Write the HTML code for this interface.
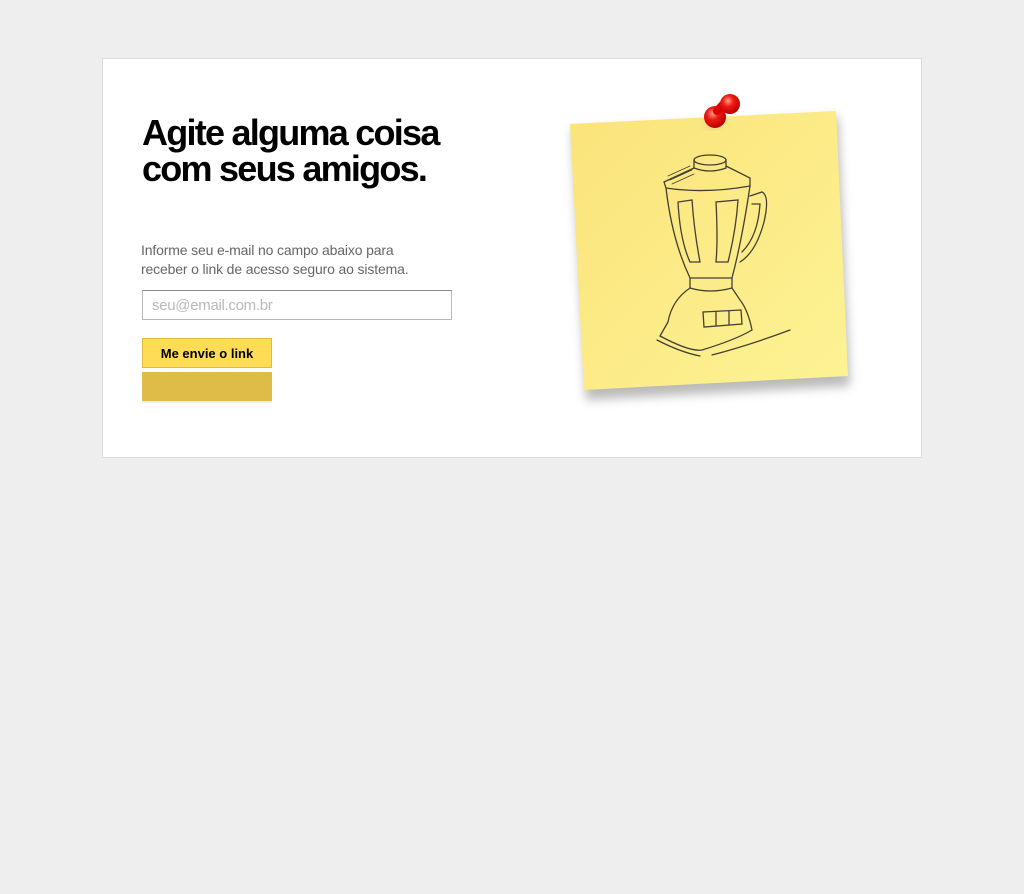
<!DOCTYPE html>
<html><head><meta charset="utf-8"><style>
html,body{margin:0;padding:0;background:#eeeeee;width:1024px;height:894px;overflow:hidden;font-family:"Liberation Sans",Arial,sans-serif}
.card{position:absolute;left:102px;top:58px;width:818px;height:398px;background:#fff;border:1px solid #dcdcdc}
h1{position:absolute;left:142px;top:115px;margin:0;font-size:36px;line-height:36px;font-weight:bold;letter-spacing:-1.75px;color:#000}
p{position:absolute;left:141px;top:241px;margin:0;font-size:14px;line-height:19px;color:#666;letter-spacing:-0.15px}
.in{position:absolute;left:142px;top:290px;width:308px;height:28px;border:1px solid #b8b8b8;border-top-color:#8a8a8a;box-sizing:content-box}
.in span{position:absolute;left:9px;top:6px;font-size:15px;color:#b9b9b9;letter-spacing:-0.3px}
.b1{position:absolute;left:142px;top:338px;width:128px;height:28px;background:#ffdc55;border:1px solid #e0bb3a;font-size:13px;font-weight:bold;text-align:center;line-height:29px;color:#000}
.b2{position:absolute;left:142px;top:372px;width:130px;height:29px;background:#dfbc47;box-shadow:0 2px 0 #eee}
</style></head><body>
<div class="card"></div>
<h1>Agite alguma coisa<br>com seus amigos.</h1>
<p>Informe seu e-mail no campo abaixo para<br>receber o link de acesso seguro ao sistema.</p>
<div class="in"><span>seu@email.com.br</span></div>
<div class="b1">Me envie o link</div>
<div class="b2"></div>
<svg style="position:absolute;left:0;top:0" width="1024" height="894">
<defs>
<filter id="sh" x="-20%" y="-20%" width="140%" height="140%"><feGaussianBlur stdDeviation="5"/></filter>
<linearGradient id="g" x1="0" y1="0" x2="1" y2="1"><stop offset="0" stop-color="#fbe37a"/><stop offset="1" stop-color="#fcf394"/></linearGradient>
<radialGradient id="pin" cx="0.4" cy="0.35" r="0.7"><stop offset="0" stop-color="#ff9a8a"/><stop offset="0.4" stop-color="#ee1a10"/><stop offset="1" stop-color="#b00000"/></radialGradient>
</defs>
<polygon points="572,130 838,117 850,386 586,400" fill="#777" opacity="0.5" filter="url(#sh)"/>
<polygon points="570,124 836,111 848,376 584,390" fill="url(#g)"/>
<g fill="none" stroke="#222" stroke-width="1.3" stroke-linecap="round" opacity="0.85">
<ellipse cx="710" cy="160" rx="16" ry="5"/>
<path d="M694,160 L694,168 Q710,174 726,168 L726,160"/>
<path d="M694,168 L664,182 L666,188 Q705,194 750,186 L750,178 L726,166"/>
<path d="M666,188 Q672,240 690,278 L732,278 Q742,240 750,186"/>
<path d="M750,196 L762,192 Q770,196 764,222 Q756,252 740,262"/>
<path d="M752,204 L760,204 Q758,236 742,252"/>
<path d="M678,202 Q680,240 690,262 L700,262 Q694,230 692,200 Z"/>
<path d="M716,202 Q718,240 716,262 L728,262 Q736,230 738,200 Z"/>
<path d="M690,278 L690,288 Q710,294 732,288 L732,278"/>
<path d="M690,288 Q672,300 668,322 L660,336 Q690,352 702,350 Q735,340 752,330 Q748,310 740,300 L732,288"/>
<path d="M703,312 L741,310 L742,324 L704,327 Z M716,312 L716,326 M729,311 L729,325"/>
<path d="M657,340 Q680,352 700,356 M712,355 Q750,345 790,330"/>
<path d="M668,176 L690,166 M670,180 L692,170 M672,184 L694,174" stroke-width="0.8"/>
</g>
<ellipse cx="712" cy="125" rx="8" ry="4" fill="#c99" opacity="0.4" filter="url(#sh)"/>
<path d="M713,126 L705,114" stroke="#a00" stroke-width="2"/>
<circle cx="715" cy="117" r="11" fill="url(#pin)"/>
<path d="M717,111 L726,101" stroke="#d00" stroke-width="8" stroke-linecap="round"/>
<circle cx="730" cy="104" r="10" fill="url(#pin)"/>
</svg>
</body></html>
